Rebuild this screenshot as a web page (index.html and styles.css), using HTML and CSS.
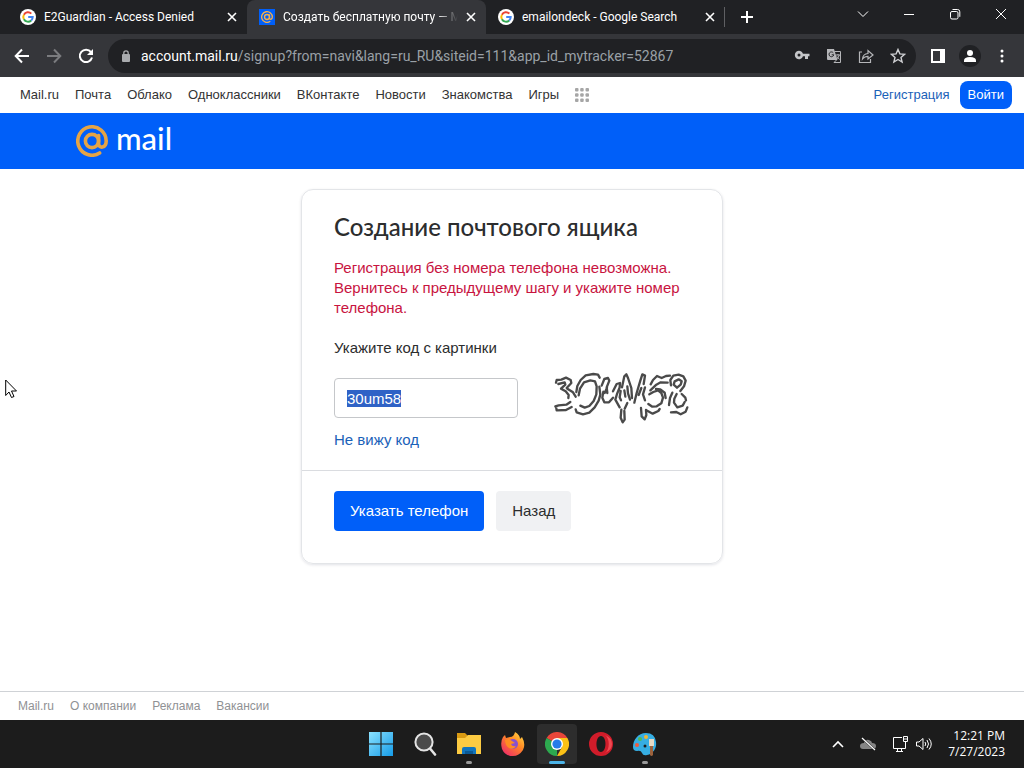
FILE: index.html
```html
<!DOCTYPE html>
<html lang="ru">

<head>
	<meta charset="utf-8">
	<meta name="viewport" content="width=device-width, initial-scale=1">
	<title>Создать бесплатную почту</title>
	<link rel="stylesheet" href="styles.css">
</head>

<body>
	<svg class="defs" width="0" height="0" aria-hidden="true">
		<symbol id="google" viewBox="0 0 16 16">
			<circle cx="8" cy="8" r="8" fill="#fff" />
			<g fill="none" stroke-width="2">
				<path d="M11.3 4.6A4.7 4.7 0 0 0 3.9 5.7" stroke="#ea4335" />
				<path d="M3.9 5.7A4.7 4.7 0 0 0 3.9 10.3" stroke="#fbbc05" />
				<path d="M3.9 10.3A4.7 4.7 0 0 0 11.2 11.4" stroke="#34a853" />
				<path d="M11.2 11.4A4.7 4.7 0 0 0 12.7 8H8.2" stroke="#4285f4" />
			</g>
		</symbol>
		<symbol id="at" viewBox="0 0 32 32">
			<g fill="none" stroke="currentColor" stroke-width="3.6" stroke-linecap="round">
				<circle cx="16" cy="16" r="6.6" />
				<path d="M22.6 10.5V18.5C22.6 24 30.2 23.4 30.2 16A14.2 14.2 0 1 0 23.6 28" />
			</g>
		</symbol>
		<symbol id="cross" viewBox="0 0 10 10">
			<path d="M1 1L9 9M9 1L1 9" fill="none" stroke="currentColor" stroke-width="1.6" />
		</symbol>
	</svg>

	<header class="browser">
		<div class="tabstrip">
			<div class="tab">
				<svg class="favicon"><use href="#google" /></svg>
				<span class="tab-title">E2Guardian - Access Denied</span>
				<button class="tab-close" aria-label="Закрыть"><svg><use href="#cross" /></svg></button>
			</div>
			<div class="tab tab-active">
				<span class="favicon favicon-mail"><svg><use href="#at" /></svg></span>
				<span class="tab-title tab-fade">Создать бесплатную почту — M</span>
				<button class="tab-close" aria-label="Закрыть"><svg><use href="#cross" /></svg></button>
			</div>
			<div class="tab tab-last">
				<svg class="favicon"><use href="#google" /></svg>
				<span class="tab-title">emailondeck - Google Search</span>
				<button class="tab-close" aria-label="Закрыть"><svg><use href="#cross" /></svg></button>
			</div>
			<button class="new-tab" aria-label="Новая вкладка">
				<svg width="14" height="14" viewBox="0 0 14 14"><path d="M7 1V13M1 7H13" stroke="#fff" stroke-width="2" /></svg>
			</button>
			<div class="window-controls">
				<button aria-label="Поиск вкладок"><svg width="12" height="12" viewBox="0 0 12 12"><path d="M1 3.5L6 8.5L11 3.5" /></svg></button>
				<button aria-label="Свернуть"><svg width="12" height="12" viewBox="0 0 12 12"><path d="M1 6.5H11" /></svg></button>
				<button aria-label="Развернуть"><svg width="12" height="12" viewBox="0 0 12 12"><rect x="1.5" y="3.5" width="7.5" height="7.5" rx="1.5" /><path d="M3.5 1.5H8.5Q10.8 1.5 10.8 3.8V8.8" /></svg></button>
				<button aria-label="Закрыть окно"><svg width="12" height="12" viewBox="0 0 12 12"><path d="M1 1L11 11M11 1L1 11" /></svg></button>
			</div>
		</div>
		<div class="toolbar">
			<button aria-label="Назад"><svg width="16" height="16" viewBox="0 0 16 16"><path d="M15 8H2M8 1.5L1.7 8L8 14.5" fill="none" stroke="#fff" stroke-width="2" /></svg></button>
			<button aria-label="Вперёд"><svg width="16" height="16" viewBox="0 0 16 16"><path d="M1 8H14M8 1.5L14.3 8L8 14.5" fill="none" stroke="#7b7c7f" stroke-width="2" /></svg></button>
			<button aria-label="Обновить"><svg width="16" height="16" viewBox="0 0 16 16"><path d="M13 4.2A6.2 6.2 0 1 0 14 9.5" fill="none" stroke="#fff" stroke-width="2" /><path d="M15 1V7H9Z" fill="#fff" /></svg></button>
			<div class="omnibox">
				<svg class="lock" width="10" height="12" viewBox="0 0 10 12"><rect x="1" y="4" width="8" height="8" rx="1" fill="#a9abae" /><path d="M2.8 5V3A2.2 2.2 0 0 1 7.2 3V5" fill="none" stroke="#a9abae" stroke-width="1.3" /></svg>
				<div class="url"><b>account.mail.ru</b>/signup?from=navi&amp;lang=ru_RU&amp;siteid=111&amp;app_id_mytracker=52867</div>
				<button aria-label="Пароли"><svg width="16" height="16" viewBox="0 0 16 16"><path fill-rule="evenodd" fill="#c4c5c8" d="M9 5.7A4.2 4.2 0 1 0 9 8.3H11V11H14V8.3H15.5V5.7ZM5 5.5A1.5 1.5 0 1 1 5 8.5A1.5 1.5 0 1 1 5 5.5Z" /></svg></button>
				<button aria-label="Перевести">
					<svg width="16" height="16" viewBox="0 0 16 16">
						<path d="M1 1H8L11.5 12H2Q1 12 1 11Z" fill="#b5b6b9" />
						<path d="M8.5 3.5H14.5V14.5H8L10.5 12" fill="none" stroke="#b5b6b9" />
						<path d="M7.3 4.8A2.4 2.4 0 1 0 7.8 6.8H5.7" fill="none" stroke="#202124" />
						<path d="M10 7H14M12 6V7M13.3 7Q12.5 10 10.5 11M11 8.5L13.5 11.5" fill="none" stroke="#b5b6b9" />
					</svg>
				</button>
				<button aria-label="Поделиться"><svg width="16" height="16" viewBox="0 0 16 16"><path d="M4 4H1.5V14.5H12.5V11M4.5 11Q5 5.8 10 5.5V2.5L15 7L10 11V8.3Q6.5 8.3 4.5 11Z" fill="none" stroke="#b5b6b9" stroke-width="1.2" /></svg></button>
				<button aria-label="В закладки"><svg width="16" height="16" viewBox="0 0 16 16"><path d="M8 1.5L9.9 5.9L14.6 6.3L11 9.4L12.1 14L8 11.5L3.9 14L5 9.4L1.4 6.3L6.1 5.9Z" fill="none" stroke="#d0d1d4" stroke-width="1.4" /></svg></button>
			</div>
			<button aria-label="Боковая панель"><svg width="14" height="14" viewBox="0 0 14 14"><path fill-rule="evenodd" d="M0 0H14V14H0ZM2 2V12H9V2Z" fill="#fff" /></svg></button>
			<button class="profile" aria-label="Профиль"><svg width="22" height="22" viewBox="0 0 22 22"><circle cx="11" cy="11" r="11" fill="#202124" /><circle cx="11" cy="8" r="3" fill="#fff" /><path d="M5 17V15.5Q5 12 11 12T17 15.5V17Z" fill="#fff" /></svg></button>
			<button aria-label="Меню"><svg width="4" height="16" viewBox="0 0 4 16" fill="#fff"><circle cx="2" cy="3" r="1.5" /><circle cx="2" cy="8" r="1.5" /><circle cx="2" cy="13" r="1.5" /></svg></button>
		</div>
	</header>

	<nav class="portal">
		<a href="#">Mail.ru</a>
		<a href="#">Почта</a>
		<a href="#">Облако</a>
		<a href="#">Одноклассники</a>
		<a href="#">ВКонтакте</a>
		<a href="#">Новости</a>
		<a href="#">Знакомства</a>
		<a href="#">Игры</a>
		<button class="portal-more" aria-label="Все проекты">
			<svg width="14" height="14" viewBox="0 0 14 14" fill="#a6a6a6">
				<rect width="3.5" height="3.5" rx="1" /><rect x="5.2" width="3.5" height="3.5" rx="1" /><rect x="10.5" width="3.5" height="3.5" rx="1" />
				<rect y="5.2" width="3.5" height="3.5" rx="1" /><rect x="5.2" y="5.2" width="3.5" height="3.5" rx="1" /><rect x="10.5" y="5.2" width="3.5" height="3.5" rx="1" />
				<rect y="10.5" width="3.5" height="3.5" rx="1" /><rect x="5.2" y="10.5" width="3.5" height="3.5" rx="1" /><rect x="10.5" y="10.5" width="3.5" height="3.5" rx="1" />
			</svg>
		</button>
		<a class="portal-signup" href="#">Регистрация</a>
		<button class="portal-login">Войти</button>
	</nav>

	<div class="brand">
		<a class="logo" href="#">
			<svg class="logo-at"><use href="#at" /></svg>
			<span>mail</span>
		</a>
	</div>

	<main>
		<form class="card" id="signup">
			<div class="card-body">
				<h1>Создание почтового ящика</h1>
				<p class="error">Регистрация без номера телефона невозможна. Вернитесь к предыдущему шагу и укажите номер телефона.</p>
				<label for="code">Укажите код с картинки</label>
				<div class="captcha">
					<input id="code" name="code" type="text" value="30um58" autocomplete="off">
					<svg class="captcha-img" viewBox="0 30 450 168" role="img" aria-label="Картинка с кодом">
						<path d="M48 68L50 60L64 59L78 53L92 60L94 69L80 84M55 72L74 67L76 74L63 86L77 94L86 105L85 114M82 86L99 97L107 110M46 139L56 136L79 134L91 126M51 151L78 150L95 141M48 139L50 151" />
						<path d="M109 96L112 78L122 60L137 46L160 42L174 44L179 53M116 106L120 86L132 67L151 61L165 64L170 79L169 103L161 123L148 138L134 143L121 137M178 80L181 104L176 122L164 142L148 158L129 163L110 157L107 148" />
						<path d="M185 77L193 57L204 54L208 62L200 82L202 99M190 95L187 113L193 127L207 127L219 113M201 83L194 99M219 94L230 72L240 69L239 82L231 102L226 119L239 142M242 93L239 112L243 121" />
						<path d="M246 82L253 49L259 43L264 54L274 84L276 114M253 91L256 110M262 79L264 100L270 119M244 149L242 173L248 187L254 179L253 153M254 146L262 129M283 128L290 99L301 62L307 43L315 47L311 72M304 84L296 105M315 82L309 103L315 121M303 144L305 169L314 178L319 165L318 150" />
						<path d="M332 73L339 60L351 48L365 54L378 48L390 47M331 91L349 74L362 67L383 68M328 103L340 96L354 91L364 99L369 113L364 130L350 139L337 140L325 132M348 87L361 88L374 98L377 114M319 151L338 161L355 153L359 147" />
						<path d="M393 76L391 60L400 47L416 44L430 49L437 62L432 79L421 93M411 83L401 74L404 64L416 58L425 64L422 74L411 83M397 98L390 114L387 135M410 102L403 116L402 128L412 142L428 137L434 126M425 102L436 113L438 121M393 157L409 156L422 163L437 155L442 142" />
					</svg>
				</div>
				<a class="captcha-help" href="#">Не вижу код</a>
			</div>
			<div class="card-actions">
				<button class="btn btn-primary" type="submit">Указать телефон</button>
				<button class="btn" type="button">Назад</button>
			</div>
		</form>
	</main>

	<footer class="links">
		<a href="#">Mail.ru</a>
		<a href="#">О компании</a>
		<a href="#">Реклама</a>
		<a href="#">Вакансии</a>
	</footer>

	<div class="taskbar">
		<div class="apps">
			<button class="app" aria-label="Пуск">
				<svg viewBox="0 0 24 24">
					<defs><linearGradient id="win" x1="0" y1="0" x2="1" y2="1"><stop offset="0" stop-color="#8be2ff" /><stop offset="1" stop-color="#159be8" /></linearGradient></defs>
					<path d="M0 0H11.4V11.4H0ZM12.6 0H24V11.4H12.6ZM0 12.6H11.4V24H0ZM12.6 12.6H24V24H12.6Z" fill="url(#win)" />
				</svg>
			</button>
			<button class="app" aria-label="Поиск">
				<svg viewBox="0 0 24 24"><path d="M17 16.5L22 22.5" stroke="#e4e4e4" stroke-width="2.6" stroke-linecap="round" /><circle cx="11" cy="10" r="8.6" fill="#4b4b4b" stroke="#e4e4e4" stroke-width="2" /></svg>
			</button>
			<button class="app app-open" aria-label="Проводник">
				<svg viewBox="0 0 24 24"><path d="M0 1H8L11 4V8H0Z" fill="#d99a12" /><path d="M0 6H8L11 3H24V22H0Z" fill="#fccb42" /><path d="M5 22V17Q5 15 7 15H17Q19 15 19 17V22Z" fill="#1275bd" /><path d="M8 22V19H16V22Z" fill="#0b5995" /></svg>
			</button>
			<button class="app" aria-label="Firefox">
				<svg viewBox="0 0 24 24">
					<defs><linearGradient id="fox" x1="1" y1="0" x2=".2" y2="1"><stop offset="0" stop-color="#ffe44a" /><stop offset=".45" stop-color="#ff8a24" /><stop offset="1" stop-color="#ee2b68" /></linearGradient></defs>
					<path d="M14 0Q19 3 19 7L21 5Q25 12 22 18Q18 24 12 24Q4 24 1 17Q-1 10 2 5L4 3L5 6L9 5Q13 5 14 0Z" fill="url(#fox)" />
					<circle cx="12" cy="12" r="5" fill="#8751cf" /><path d="M4 8Q8 6 11 9L14 11L10 12Q11 15 15 14Q13 18 8 16Q4 13 4 8Z" fill="#ff8d21" />
				</svg>
			</button>
			<button class="app app-open app-current" aria-label="Chrome">
				<svg viewBox="0 0 24 24">
					<path d="M12 12L1.6 6A12 12 0 0 1 22.4 6Z" fill="#e8463a" />
					<path d="M12 12V24A12 12 0 0 1 1.6 6Z" fill="#2da94f" />
					<path d="M12 6H22.4A12 12 0 0 1 12 24L17 15Z" fill="#fbc116" />
					<circle cx="12" cy="12" r="6" fill="#fff" /><circle cx="12" cy="12" r="4.6" fill="#267cea" />
				</svg>
			</button>
			<button class="app" aria-label="Opera">
				<svg viewBox="0 0 24 24"><path fill-rule="evenodd" d="M12 0A12 12 0 1 0 12 24A12 12 0 1 0 12 0ZM12 4C18 4 18 20 12 20S6 4 12 4Z" fill="#d01c2a" /><path d="M16 3C21 6 21 18 16 21Q23 18 23 12T16 3Z" fill="#ef4a52" /></svg>
			</button>
			<button class="app app-open" aria-label="Paint">
				<svg viewBox="0 0 24 24">
					<path d="M13 1C5 1 0 8 0 15Q0 19 4 19Q8 18 9 21Q10 24 14 23C20 22 24 16 23 10Q22 1 13 1Z" fill="#36aee3" />
					<circle cx="4" cy="13" r="2" fill="#ef5b3c" /><circle cx="7" cy="7" r="2" fill="#55b84e" /><circle cx="13" cy="5" r="2" fill="#f0b531" /><circle cx="12" cy="14" r="1.5" fill="#1d1d1d" />
					<path d="M17 13H20V23Q18.5 25 17 23Z" fill="#9b623d" /><path d="M16 7H21V14H16Z" fill="#e5d9c5" />
				</svg>
			</button>
		</div>
		<div class="tray">
			<svg width="12" height="8" viewBox="0 0 12 8"><path d="M1 7L6 2L11 7" fill="none" stroke="#fff" stroke-width="1.6" /></svg>
			<svg width="16" height="14" viewBox="0 0 16 14"><path d="M3 12Q0 12 0 9T4 6Q5 2 9 3Q12 4 12 6Q16 6 16 9T13 12Z" fill="#858585" /><path d="M2 1L15 13" stroke="#1c1c1c" stroke-width="2" /><path d="M2 1L15 13" stroke="#fff" stroke-width="1.2" /></svg>
			<svg width="16" height="16" viewBox="0 0 16 16" fill="none" stroke="#fff"><path d="M10 1.5H1.5V12.5H13.5V7.5M4 15.5H11M5.5 12.5V15.5M9.5 12.5V15.5M11.5 .5H15.5V5.5H11.5ZM13.5 5.5V8M11.5 3H15.5" /></svg>
			<svg width="16" height="14" viewBox="0 0 16 14" fill="none" stroke="#fff"><path d="M.5 5H3L7 1.5V12.5L3 9H.5ZM9 5Q10.5 7 9 9M11 3Q14 7 11 11M13 1.5Q17.5 7 13 12.5" /></svg>
			<div class="clock">12:21 PM<br>7/27/2023</div>
		</div>
	</div>

	<svg class="pointer" width="12" height="20" viewBox="0 0 12 20"><path d="M.7 1V16.5L4 13L6.5 18.5L9 17.5L6.5 12H11.5Z" fill="#fff" stroke="#000" /></svg>

	<script>
		const code = document.getElementById('code');
		code.focus();
		code.select();

		document.getElementById('signup').addEventListener('submit', function (event) {
			event.preventDefault();
		});
	</script>
</body>

</html>
```

FILE: styles.css
```css
* {
	box-sizing: border-box;
}

body {
	margin: 0;
	min-height: 100vh;
	display: flex;
	flex-direction: column;
	background-color: #fff;
	color: #2c2d2e;
	font: 15px/20px "Liberation Sans", Arial, sans-serif;
}

a {
	color: #1a61b8;
	text-decoration: none;
}

button {
	border: 0;
	padding: 0;
	background: none;
	color: inherit;
	font: inherit;
}

.defs {
	position: absolute;
}

/* browser window */
.browser {
	background-color: #35363a;
	color: #fff;
	font-family: Roboto, "Open Sans", sans-serif;
}

.tabstrip {
	display: flex;
	height: 34px;
	padding-left: 8px;
	background-color: #202124;
}

.tab {
	display: flex;
	align-items: center;
	flex: 0 1 239px;
	min-width: 0;
	gap: 8px;
	padding: 0 10px 0 12px;
	font-size: 12px;
}

.tab-active {
	background-color: #35363a;
	border-radius: 8px 8px 0 0;
}

.tab-last {
	background: linear-gradient(#5f6063, #5f6063) right center / 1px 20px no-repeat;
}

.favicon {
	flex: none;
	width: 16px;
	height: 16px;
}

.favicon-mail {
	display: flex;
	padding: 2px;
	background-color: #005ff9;
	color: #f5b04a;
}

.favicon-mail svg {
	width: 12px;
	height: 12px;
}

.tab-title {
	flex: 1;
	overflow: hidden;
	white-space: nowrap;
}

.tab-fade {
	-webkit-mask-image: linear-gradient(to right, #000 88%, transparent);
	mask-image: linear-gradient(to right, #000 88%, transparent);
}

.tab-close {
	display: flex;
}

.tab-close svg {
	width: 10px;
	height: 10px;
}

.new-tab {
	width: 44px;
}

.new-tab svg {
	display: block;
	margin: auto;
}

.window-controls {
	display: flex;
	margin-left: auto;
}

.window-controls button {
	display: flex;
	justify-content: center;
	width: 46px;
	padding-top: 8px;
}

.window-controls svg {
	fill: none;
	stroke: #fff;
}

.toolbar {
	display: flex;
	align-items: center;
	height: 43px;
	padding: 0 6px;
}

.toolbar button {
	display: flex;
	justify-content: center;
	width: 32px;
}

.omnibox {
	display: flex;
	align-items: center;
	flex: 1;
	min-width: 0;
	height: 34px;
	margin: 0 6px;
	padding: 0 2px 0 13px;
	border-radius: 17px;
	background-color: #202124;
}

.url {
	flex: 1;
	min-width: 0;
	margin-left: 10px;
	overflow: hidden;
	white-space: nowrap;
	color: #9aa0a6;
	font-size: 14px;
}

.url b {
	color: #fff;
	font-weight: normal;
}

/* portal links */
.portal {
	display: flex;
	align-items: center;
	gap: 16px;
	height: 36px;
	padding: 0 12px 0 20px;
	font-size: 13px;
}

.portal a {
	color: #333;
}

.portal-more svg {
	display: block;
}

.portal .portal-signup {
	margin-left: auto;
	color: #1a61b8;
}

.portal-login {
	height: 28px;
	margin-left: -6px;
	padding: 0 8px;
	border-radius: 8px;
	background-color: #005ff9;
	color: #fff;
}

.brand {
	height: 56px;
	padding: 0 76px;
	background-color: #005ff9;
}

.logo {
	display: inline-flex;
	align-items: center;
	gap: 8px;
	height: 56px;
	color: #fff;
	font: 500 31px/48px Lato, sans-serif;
}

.logo span {
	padding-bottom: 6px;
}

.logo-at {
	width: 32px;
	height: 32px;
	color: #e5a445;
}

/* form */
main {
	flex: 1;
	padding: 20px;
}

.card {
	max-width: 422px;
	margin: 0 auto;
	border: 1px solid #e3e5e8;
	border-radius: 12px;
	box-shadow: 0 1px 3px rgba(0, 16, 61, 0.12);
}

.card-body {
	padding: 24px 32px 20px;
	border-bottom: 1px solid #dadce0;
}

.card h1 {
	margin: 0 0 18px;
	font: 500 24px/26px Lato, sans-serif;
}

.error {
	margin: 0 0 20px;
	color: #c8143f;
}

.card label {
	display: block;
	margin-bottom: 12px;
}

.captcha {
	display: flex;
	align-items: center;
	justify-content: space-between;
}

.captcha input {
	width: 184px;
	height: 40px;
	padding: 0 12px;
	border: 1px solid #c5c7ca;
	border-radius: 4px;
	outline: none;
	color: #2c2d2e;
	font: 15px "Liberation Sans", Arial, sans-serif;
}

.captcha input::selection {
	background-color: #2f62c6;
	color: #fff;
}

.captcha-img {
	width: 150px;
	height: 56px;
	fill: none;
	stroke: #4a4a4a;
	stroke-width: 7;
	stroke-linecap: round;
	stroke-linejoin: round;
}

.captcha-help {
	display: inline-block;
	margin-top: 4px;
	vertical-align: top;
}

.card-actions {
	display: flex;
	gap: 12px;
	padding: 20px 32px 32px;
}

.btn {
	height: 40px;
	padding: 0 16px;
	border-radius: 4px;
	background-color: #f0f1f3;
}

.btn-primary {
	background-color: #005ff9;
	color: #fff;
}

.links {
	display: flex;
	gap: 16px;
	padding: 4px 18px;
	border-top: 1px solid #cfd2d6;
	font-size: 12px;
}

.links a {
	color: #8f9194;
}

/* taskbar */
.taskbar {
	display: grid;
	grid-template-columns: 1fr auto 1fr;
	align-items: center;
	height: 48px;
	background-color: #1c1c1c;
	color: #fff;
}

.apps {
	display: flex;
	grid-column: 2;
	gap: 4px;
	padding-left: 2px;
}

.app {
	position: relative;
	width: 40px;
	height: 40px;
	border-radius: 4px;
}

.app svg {
	display: block;
	width: 24px;
	height: 24px;
	margin: auto;
}

.app-open::after {
	content: "";
	position: absolute;
	bottom: 0;
	left: 17px;
	width: 6px;
	height: 3px;
	border-radius: 2px;
	background-color: #9a9a9a;
}

.app-current {
	background-color: #2d2d2d;
}

.app-current::after {
	left: 12px;
	width: 16px;
	background-color: #4cb4e8;
}

.tray {
	display: flex;
	align-items: center;
	justify-content: flex-end;
	gap: 16px;
	padding-right: 19px;
}

.tray svg + svg + svg + svg {
	margin-left: -8px;
}

.clock {
	font: 12px/16px "Open Sans", "Noto Sans", sans-serif;
	text-align: right;
}

.pointer {
	position: absolute;
	top: 379px;
	left: 5px;
}
```
